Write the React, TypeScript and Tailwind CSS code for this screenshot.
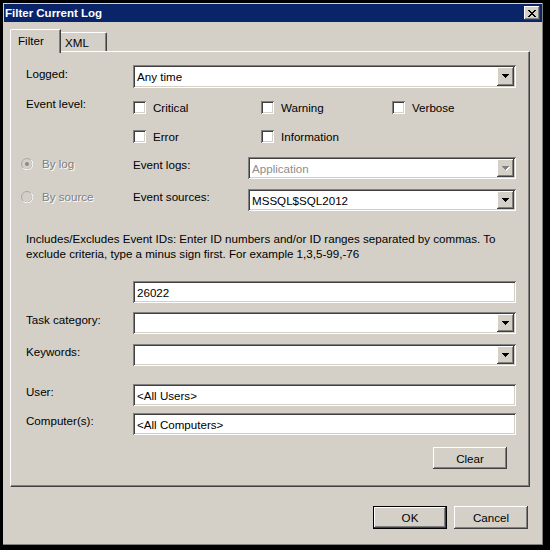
import * as React from 'react';

// classic 3d bevels
const sunken = 'shadow-[inset_1px_1px_0_#808080,inset_-1px_-1px_0_#ffffff,inset_2px_2px_0_#404040,inset_-2px_-2px_0_#d4d0c8]';
const raised = 'shadow-[inset_-1px_-1px_0_#404040,inset_1px_1px_0_#ffffff,inset_-2px_-2px_0_#808080,inset_2px_2px_0_#d4d0c8]';
const etched = 'text-[#808080] [text-shadow:1px_1px_0_#ffffff]';

const Arrow = ({ disabled }: { disabled?: boolean }) => (
  <svg width="8" height="5" viewBox="0 0 8 5" shapeRendering="crispEdges">
    {disabled && (
      <g fill="#ffffff">
        <rect x="1" y="1" width="7" height="1" />
        <rect x="2" y="2" width="5" height="1" />
        <rect x="3" y="3" width="3" height="1" />
        <rect x="4" y="4" width="1" height="1" />
      </g>
    )}
    <g fill={disabled ? '#808080' : '#000000'}>
      <rect x="0" y="0" width="7" height="1" />
      <rect x="1" y="1" width="5" height="1" />
      <rect x="2" y="2" width="3" height="1" />
      <rect x="3" y="3" width="1" height="1" />
    </g>
  </svg>
);

interface IField {
  value?: string;
  disabled?: boolean;
  combo?: boolean;
}

const Field: React.FC<IField> = ({ value, disabled, combo }) => (
  <div className={`flex-1 h-[22px] bg-white p-[2px] flex items-stretch ${sunken}`}>
    <div className={`flex-1 flex items-center pl-[2px] whitespace-nowrap ${disabled ? 'text-[#8d8d8d]' : ''}`}>
      {value}
    </div>
    {combo && (
      <div className={`w-[17px] bg-[#d4d0c8] flex items-center justify-center pl-[1px] ${raised}`}>
        <Arrow disabled={disabled} />
      </div>
    )}
  </div>
);

const Check = ({ label }: { label: string }) => (
  <div className="flex items-center h-[15px]">
    <div className={`w-[13px] h-[13px] bg-white ${sunken}`} />
    <span className="ml-[7px]">{label}</span>
  </div>
);

const Radio = ({ checked }: { checked?: boolean }) => (
  <svg width="12" height="12" viewBox="0 0 12 12">
    <circle cx="6" cy="6" r="5.5" fill="#d4d0c8" stroke="#a9a7a2" />
    <path d="M10.2 2.2 A5.5 5.5 0 0 1 2.2 10.2" fill="none" stroke="#ffffff" strokeWidth="1" />
    {checked && <circle cx="6" cy="6" r="2" fill="#8a8a8a" />}
  </svg>
);

const Button = ({ label, isDefault }: { label: string; isDefault?: boolean }) =>
  isDefault ? (
    <div className="w-[74px] h-[23px] border border-black">
      <div className={`w-full h-full bg-[#d4d0c8] flex items-center justify-center ${raised}`}>{label}</div>
    </div>
  ) : (
    <div className={`w-[74px] h-[23px] bg-[#d4d0c8] flex items-center justify-center ${raised}`}>{label}</div>
  );

const CloseGlyph = () => (
  <svg width="8" height="7" viewBox="0 0 8 7" shapeRendering="crispEdges" fill="#000000">
    <rect x="0" y="0" width="2" height="1" />
    <rect x="6" y="0" width="2" height="1" />
    <rect x="1" y="1" width="2" height="1" />
    <rect x="5" y="1" width="2" height="1" />
    <rect x="2" y="2" width="4" height="1" />
    <rect x="3" y="3" width="2" height="1" />
    <rect x="2" y="4" width="4" height="1" />
    <rect x="1" y="5" width="2" height="1" />
    <rect x="5" y="5" width="2" height="1" />
    <rect x="0" y="6" width="2" height="1" />
    <rect x="6" y="6" width="2" height="1" />
  </svg>
);

export default function App() {
  return (
    <div className="w-[550px] h-[550px] bg-black pt-[3px] pl-[3px] font-['Liberation_Sans',Arial,sans-serif] text-[11.6px] leading-[15px] text-black">
      <div className="w-[540px] h-[542px] bg-[#d4d0c8] p-[1px] flex flex-col shadow-[inset_-1px_-1px_0_#808080]">
        {/* title bar */}
        <div className="h-[18px] bg-[#0a246a] flex items-center justify-between pl-[1px] pr-[2px]">
          <span className="text-white font-bold text-[11.5px]">Filter Current Log</span>
          <div className={`w-[16px] h-[14px] bg-[#d4d0c8] flex items-center justify-center ${raised}`}>
            <CloseGlyph />
          </div>
        </div>

        {/* tabs */}
        <div className="mt-[7px] ml-[6px] flex items-end h-[22px]">
          <div className="relative z-10 h-[24px] -mb-[2px] w-[51px] bg-[#d4d0c8] border-t border-l border-white rounded-tl-[2px] border-r border-r-[#404040] shadow-[inset_-1px_0_0_#808080] pl-[7px] pt-[3px]">
            Filter
          </div>
          <div className="h-[19px] w-[46px] bg-[#d4d0c8] border-t border-white border-r border-r-[#404040] rounded-tr-[2px] shadow-[inset_-1px_0_0_#808080] pl-[4px] pt-[2px]">
            XML
          </div>
        </div>

        {/* tab page */}
        <div className="ml-[6px] w-[520px] h-[436px] border-t border-l border-white border-r border-b border-r-[#404040] border-b-[#404040] shadow-[inset_-1px_-1px_0_#808080] pt-[13px] pl-[15px] pr-[13px] flex flex-col">
          <div className="flex h-[23px]">
            <div className="w-[107px] pt-[1px]">Logged:</div>
            <div className="flex-1 flex">
              <div className={`flex-1 h-[23px] bg-white p-[2px] flex items-stretch ${sunken}`}>
                <div className="flex-1 flex items-center pl-[2px]">Any time</div>
                <div className={`w-[17px] bg-[#d4d0c8] flex items-center justify-center pl-[1px] ${raised}`}>
                  <Arrow />
                </div>
              </div>
            </div>
          </div>

          <div className="flex mt-[8px]">
            <div className="w-[107px]">Event level:</div>
            <div className="pt-[4px] grid grid-cols-[128px_131px_1fr] gap-y-[14px]">
              <Check label="Critical" />
              <Check label="Warning" />
              <Check label="Verbose" />
              <Check label="Error" />
              <Check label="Information" />
            </div>
          </div>

          <div className="flex items-start mt-[13px] -ml-[5px]">
            <div className={`w-[112px] flex items-center h-[15px] -mt-[1px] ${etched}`}>
              <Radio checked />
              <span className="ml-[9px]">By log</span>
            </div>
            <div className="w-[115px]">Event logs:</div>
            <Field value="Application" disabled combo />
          </div>

          <div className="flex items-start mt-[10px] -ml-[5px]">
            <div className={`w-[112px] flex items-center h-[15px] ${etched}`}>
              <Radio />
              <span className="ml-[9px]">By source</span>
            </div>
            <div className="w-[115px]">Event sources:</div>
            <Field value="MSSQL$SQL2012" combo />
          </div>

          <p className="mt-[20px]">
            Includes/Excludes Event IDs: Enter ID numbers and/or ID ranges separated by commas. To
            <br />
            exclude criteria, type a minus sign first. For example 1,3,5-99,-76
          </p>

          <div className="flex mt-[20px] pl-[107px]">
            <Field value="26022" />
          </div>

          <div className="flex mt-[9px]">
            <div className="w-[107px]">Task category:</div>
            <Field combo />
          </div>

          <div className="flex mt-[10px]">
            <div className="w-[107px]">Keywords:</div>
            <Field combo />
          </div>

          <div className="flex mt-[18px]">
            <div className="w-[107px]">User:</div>
            <Field value="<All Users>" />
          </div>

          <div className="flex mt-[7px]">
            <div className="w-[107px]">Computer(s):</div>
            <Field value="<All Computers>" />
          </div>

          <div className="flex justify-end mt-[12px] pr-[9px]">
            <div className={`w-[74px] h-[22px] bg-[#d4d0c8] flex items-center justify-center ${raised}`}>Clear</div>
          </div>
        </div>

        {/* dialog buttons */}
        <div className="flex justify-end gap-[7px] mt-[19px] pr-[14px]">
          <Button label="OK" isDefault />
          <Button label="Cancel" />
        </div>
      </div>
    </div>
  );
}
